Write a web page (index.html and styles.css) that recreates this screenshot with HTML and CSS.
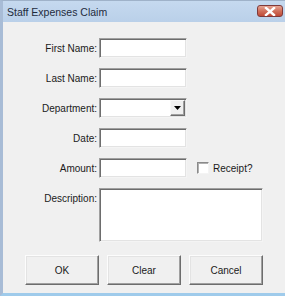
FILE: index.html
```html
<!DOCTYPE html>
<html lang="en">
<head>
    <meta charset="UTF-8">
    <title>Staff Expenses Claim</title>
    <link rel="stylesheet" href="styles.css">
</head>
<body>

    <div class="window">
        <div class="title-bar">
            <span class="title">Staff Expenses Claim</span>
            <span class="close-btn">
                <svg width="12" height="9" viewBox="0 0 12 9">
                    <path d="M2 1 L10 8 M10 1 L2 8" stroke="#fff" stroke-width="2.4" stroke-linecap="square" fill="none"/>
                </svg>
            </span>
        </div>

        <div class="content">
            <form class="claim-form">
                <label>First Name:</label>
                <div class="field"><span class="textbox"></span></div>

                <label>Last Name:</label>
                <div class="field"><span class="textbox"></span></div>

                <label>Department:</label>
                <div class="field">
                    <span class="textbox combo">
                        <span class="combo-btn">
                            <svg width="7" height="4" viewBox="0 0 7 4"><path d="M0 0 H7 L3.5 4 Z" fill="#000"/></svg>
                        </span>
                    </span>
                </div>

                <label>Date:</label>
                <div class="field"><span class="textbox"></span></div>

                <label>Amount:</label>
                <div class="field">
                    <span class="textbox"></span>
                    <span class="checkbox"></span>
                    <span class="check-label">Receipt?</span>
                </div>

                <label class="top">Description:</label>
                <div class="field"><span class="textbox memo"></span></div>
            </form>

            <div class="buttons">
                <button type="button">OK</button>
                <button type="button">Clear</button>
                <button type="button">Cancel</button>
            </div>
        </div>
    </div>

</body>
</html>
```

FILE: styles.css
```css
body {
    margin: 0;
    padding: 0;
    font-family: 'Liberation Sans', Arial, sans-serif;
    font-size: 10px;
    color: #1a1a1a;
    background-color: #f0f0f0;
}
.window {
    width: 282px;
    height: 292px;
    border-left: 3px solid #a8bcd6;
    border-top: 1px solid #9fb2c9;
    border-bottom: 3px solid #9fcbeb;
    background-color: #f0f0f0;
    overflow: hidden;
}
.title-bar {
    height: 21px;
    display: flex;
    align-items: center;
    justify-content: space-between;
    padding: 0 2px 0 4px;
    background: linear-gradient(#c5d9ef, #bad0e9);
}
.title {
    font-size: 10.5px;
    color: #1e2b3c;
}
.close-btn {
    width: 26px;
    height: 12px;
    margin-top: -1px;
    display: flex;
    align-items: center;
    justify-content: center;
    border: 1px solid #7f3a3a;
    border-radius: 3px;
    background: linear-gradient(#e6a594, #d0705c 50%, #c04a37);
    box-sizing: border-box;
}
.content {
    padding: 16px 0 0 0;
}
.claim-form {
    display: grid;
    grid-template-columns: 94px 1fr;
    column-gap: 2px;
    row-gap: 10px;
}
.claim-form label {
    text-align: right;
    align-self: center;
}
.claim-form label.top {
    align-self: start;
    margin-top: 5px;
}
.field {
    display: flex;
    align-items: center;
}
.textbox {
    display: block;
    width: 88px;
    height: 20px;
    box-sizing: border-box;
    background-color: #fff;
    border: 1px solid;
    border-color: #a0a0a0 #f4f4f4 #f4f4f4 #a0a0a0;
    box-shadow: inset 1px 1px 0 #6d6d6d, inset -1px -1px 0 #e3e3e3;
    position: relative;
}
.memo {
    width: 164px;
    height: 54px;
}
.combo-btn {
    position: absolute;
    right: 1px;
    top: 1px;
    width: 15px;
    height: 16px;
    box-sizing: border-box;
    display: flex;
    align-items: center;
    justify-content: center;
    background-color: #f0f0f0;
    border: 1px solid;
    border-color: #f8f8f8 #6d6d6d #6d6d6d #f8f8f8;
    box-shadow: inset -1px -1px 0 #a0a0a0;
}
.checkbox {
    width: 12px;
    height: 12px;
    margin-left: 10px;
    box-sizing: border-box;
    background-color: #fff;
    border: 1px solid;
    border-color: #8a8a8a #f4f4f4 #f4f4f4 #8a8a8a;
    box-shadow: inset 1px 1px 0 #b0b0b0;
}
.check-label {
    margin-left: 4px;
}
.buttons {
    display: flex;
    gap: 8px;
    padding: 13px 0 0 22px;
}
button {
    width: 74px;
    height: 30px;
    padding: 0;
    font-family: 'Liberation Sans', Arial, sans-serif;
    font-size: 10px;
    color: #1a1a1a;
    background-color: #f0f0f0;
    border: 1px solid;
    border-color: #fcfcfc #6d6d6d #6d6d6d #fcfcfc;
    box-shadow: inset -1px -1px 0 #a0a0a0, inset 1px 1px 0 #e3e3e3;
}
```
